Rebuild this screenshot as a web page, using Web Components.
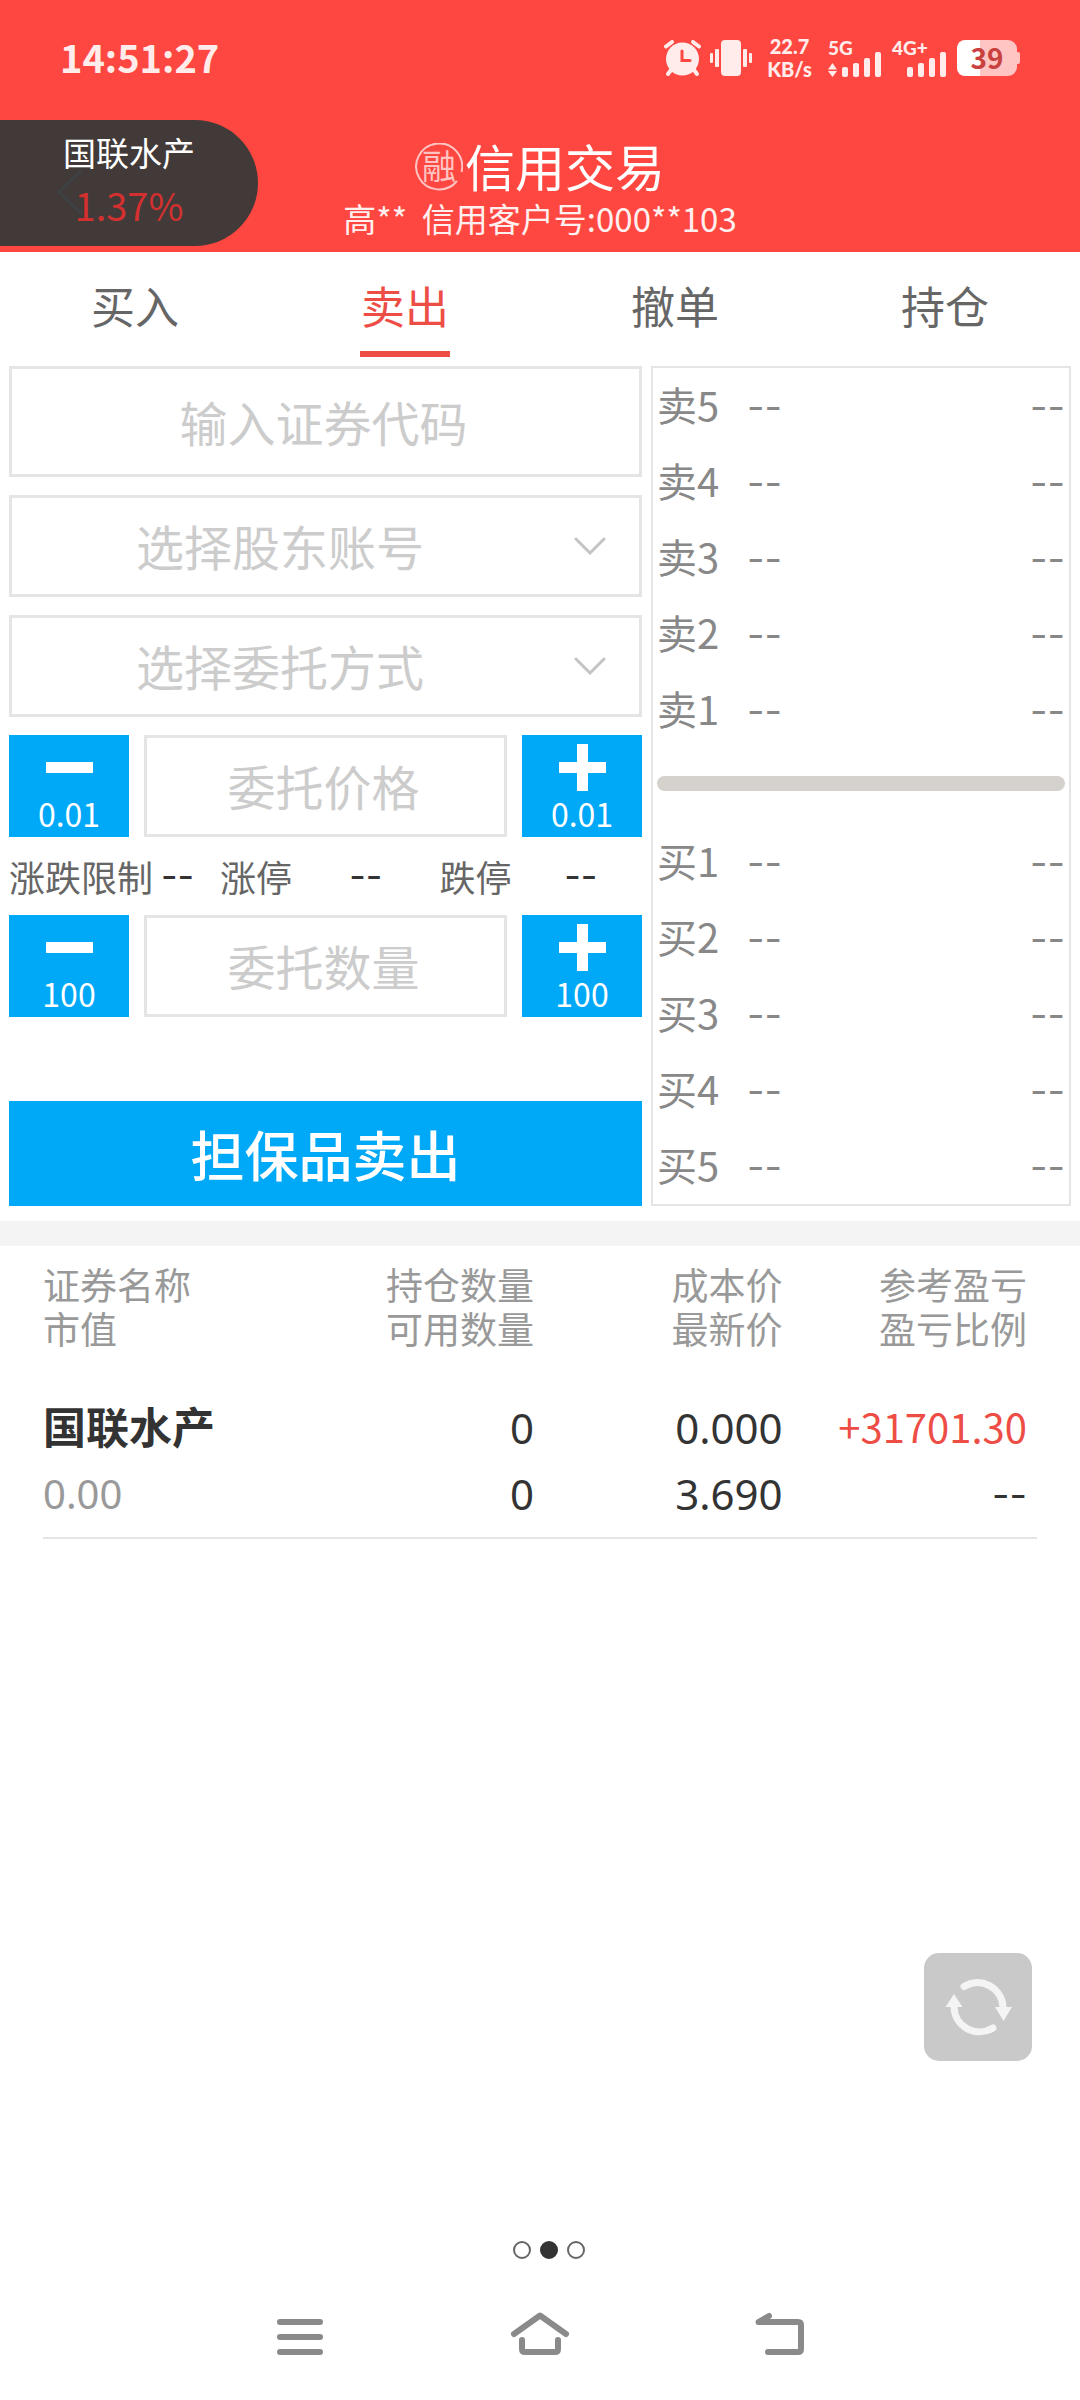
<!DOCTYPE html>
<html lang="zh-CN">
<head>
<meta charset="utf-8">
<meta name="viewport" content="width=device-width, initial-scale=1">
<title>信用交易</title>
<style>
:root {
  --brand: #ff4741;
  --accent: #ee4d46;
  --blue: #00a8f8;
  --line: #e5e5e5;
  --hint: #ccc;
  --muted: #999;
  --ink: #333;
}
body {
  margin: 0;
  background: #fff;
  color: var(--ink);
  font-family: "Noto Sans CJK SC", "Noto Sans", sans-serif;
}
</style>
</head>
<body>
<trade-app>
  <status-bar slot="top" time="14:51:27" rate="22.7" unit="KB/s" battery="39"></status-bar>
  <page-header slot="top" seal="融" heading="信用交易">高**&nbsp; 信用客户号:000**103
    <ticker-pill slot="float" name="国联水产" change="1.37%"></ticker-pill>
  </page-header>
  <tab-bar slot="top">
    <tab-item>买入</tab-item>
    <tab-item active>卖出</tab-item>
    <tab-item>撤单</tab-item>
    <tab-item>持仓</tab-item>
  </tab-bar>
  <order-panel slot="order">
    <text-field tall hint="输入证券代码"></text-field>
    <pick-field hint="选择股东账号"></pick-field>
    <pick-field hint="选择委托方式"></pick-field>
    <step-field hint="委托价格" step="0.01"></step-field>
    <price-limits></price-limits>
    <step-field hint="委托数量" step="100"></step-field>
    <submit-button>担保品卖出</submit-button>
    <order-book slot="book"></order-book>
  </order-panel>
  <holdings-table></holdings-table>
  <refresh-button slot="float"></refresh-button>
  <page-dots slot="bottom" count="3" current="1"></page-dots>
  <system-nav slot="bottom"></system-nav>
</trade-app>

<script>
const define = (name, render) => customElements.define(name, class extends HTMLElement {
  connectedCallback() {
    if (this.shadowRoot) return;
    const root = this.attachShadow({ mode: "open" });
    root.innerHTML = render(this);
  }
});
const attr = (el, name) => el.getAttribute(name) || "";

define("trade-app", () => `
  <style>
    :host { display: flex; flex-direction: column; min-height: 100vh; }
    main { flex: 1; display: flex; flex-direction: column; position: relative; }
  </style>
  <header><slot name="top"></slot></header>
  <main><slot name="order"></slot><slot></slot><slot name="float"></slot></main>
  <footer><slot name="bottom"></slot></footer>`);

define("status-bar", el => `
  <style>
    :host { display: flex; align-items: center; justify-content: space-between; height: 116px; padding: 0 60px;
      background: var(--brand); color: #ffeceb; font-weight: 700; }
    time { font-size: 38px; line-height: 48px; padding-bottom: 2px; }
    .icons { display: flex; align-items: center; }
    svg { display: block; fill: currentColor; }
    .vib { margin-left: 9px; }
    .rate { margin-left: 15px; font-family: Lato, sans-serif; font-weight: 900; font-size: 20px; line-height: 23px; text-align: center; width: 45px; }
    .rate span { display: block; }
    .sig { margin-left: 16px; height: 40px; width: 54px; display: flex; flex-direction: column;
      font-family: Lato, sans-serif; font-weight: 900; font-size: 19px; line-height: 20px; }
    .sig svg { margin-top: -6px; }
    .sig.second { margin-left: 10px; width: 55px; }
    .sig.second svg { align-self: flex-end; }
    .bat { margin-left: 10px; width: 63px; height: 36px; display: grid; }
    .bat > * { grid-area: 1 / 1; }
    .bat span { width: 60px; text-align: center; font-size: 28px; line-height: 34px; color: #c8413e; }
  </style>
  <time>${attr(el, "time")}</time>
  <div class="icons">
    <svg width="37" height="36" viewBox="0 0 37 36">
      <circle cx="18.500" cy="19" r="16.500"/>
      <path d="M2 6.500 8 2M35 6.500 29 2M7 30l-3 4M30 30l3 4" fill="none" stroke="currentColor" stroke-width="4" stroke-linecap="round"/>
      <path d="M18 11v9.500h8" fill="none" stroke="#ff4741" stroke-width="3" stroke-linecap="round"/>
    </svg>
    <svg class="vib" width="42" height="36" viewBox="0 0 42 36">
      <rect x="11" width="20" height="36" rx="4"/><rect x="5" y="9" width="4" height="18" rx="1"/><rect x="33" y="9" width="4" height="18" rx="1"/>
      <rect y="13" width="3" height="10" rx="1"/><rect x="39" y="13" width="3" height="10" rx="1"/>
    </svg>
    <div class="rate"><span>${attr(el, "rate")}</span><span>${attr(el, "unit")}</span></div>
    <div class="sig">5G
      <svg width="54" height="25" viewBox="0 0 54 25">
        <path d="M0 17.500 4.500 11 9 17.500zM0 19h9l-4.500 6z"/>
        <rect x="14" y="15" width="6" height="10" rx="2"/><rect x="25" y="11" width="6" height="14" rx="2"/>
        <rect x="36" y="6" width="6" height="19" rx="2"/><rect x="47" width="6" height="25" rx="2"/>
      </svg>
    </div>
    <div class="sig second">4G+
      <svg width="40" height="25" viewBox="0 0 40 25">
        <rect y="15" width="6" height="10" rx="2"/><rect x="11" y="11" width="6" height="14" rx="2"/>
        <rect x="22" y="6" width="6" height="19" rx="2"/><rect x="33" width="6" height="25" rx="2"/>
      </svg>
    </div>
    <div class="bat">
      <svg width="63" height="36" viewBox="0 0 63 36">
        <path d="M60 12h1q2 0 2 2v8q0 2-2 2h-1z" fill="#ffc5c3"/>
        <rect width="60" height="36" rx="9" fill="#ffc5c3"/>
        <path d="M23 0H9Q0 0 0 9v18q0 9 9 9h14z" fill="#fff"/>
      </svg>
      <span>${attr(el, "battery")}</span>
    </div>
  </div>`);

define("page-header", el => `
  <style>
    :host { display: block; position: relative; background: var(--brand); color: #fff; height: 136px; text-align: center; }
    .head { display: flex; flex-direction: column; align-items: center; padding-top: 26px; }
    h1 { display: flex; align-items: center; gap: 2px; margin: 0; font-family: "Liberation Sans", "Noto Sans CJK SC", sans-serif;
      font-size: 50px; line-height: 56px; font-weight: 400; }
    .seal { align-self: flex-start; display: grid; place-items: center; width: 48px; height: 48px; font-size: 34px; line-height: 50px; color: #ffc4c1; }
    .seal > * { grid-area: 1 / 1; }
    p { margin: 0; font-size: 33px; line-height: 40px; color: #fff0ef; }
  </style>
  <div class="head">
    <h1><span class="seal"><svg width="48" height="48" viewBox="0 0 48 48" fill="none" stroke="currentColor" stroke-width="2"><path d="M46.500 29A23 23 0 1 0 42 38"/></svg><span>${attr(el, "seal")}</span></span>${attr(el, "heading")}</h1>
    <p><slot></slot></p>
  </div>
  <slot name="float"></slot>`);

define("ticker-pill", el => `
  <style>
    :host { position: absolute; left: 0; top: 4px; width: 258px; height: 126px; box-sizing: border-box; padding-top: 6px;
      border-radius: 0 63px 63px 0; background: #423a39; display: flex; flex-direction: column; align-items: center; color: #fff; }
    svg { position: absolute; left: 56px; top: 48px; fill: none; stroke: #3e4142; stroke-width: 3; }
    span, b { position: relative; }
    span { font-size: 33px; line-height: 52px; }
    b { font-weight: 400; font-size: 38px; line-height: 54px; color: #d3302f; }
  </style>
  <svg width="28" height="48" viewBox="0 0 28 48"><path d="M26 2 3 24l23 22"/></svg>
  <span>${attr(el, "name")}</span><b>${attr(el, "change")}</b>`);

define("tab-bar", () => `
  <style>:host { display: block; } nav { display: flex; }</style>
  <nav><slot></slot></nav>`);

define("tab-item", () => `
  <style>
    :host { flex: 1; display: flex; justify-content: center; }
    button { box-sizing: border-box; font: inherit; font-size: 44px; line-height: 91px; height: 105px; width: 90px; padding: 8px 0 0; border: 0; background: none;
      color: #666; border-bottom: 6px solid transparent; white-space: nowrap; }
    :host([active]) button { color: var(--accent); border-color: var(--accent); }
  </style>
  <button type="button"><slot></slot></button>`);

define("order-panel", () => `
  <style>
    :host { display: block; border-bottom: 25px solid #f4f4f4; }
    .cols { display: grid; grid-template-columns: 633fr 420fr; gap: 9px; padding: 9px 9px 15px; }
    form { display: flex; flex-direction: column; min-width: 0; }
  </style>
  <div class="cols"><form><slot></slot></form><slot name="book"></slot></div>`);

const fieldCss = `
    input, select { display: block; box-sizing: border-box; width: 100%; height: 102px; margin: 0; padding: 0 4px 2px 0; border: 3px solid var(--line);
      border-radius: 0; background: #fff; font: inherit; font-size: 48px; text-align: center; color: var(--ink); outline: 0; }
    input::placeholder { color: var(--hint); opacity: 1; }`;

define("text-field", el => `
  <style>
    :host { display: block; margin-bottom: 18px; }
    ${fieldCss}
    :host([tall]) input { height: 111px; }
  </style>
  <input type="text" placeholder="${attr(el, "hint")}" aria-label="${attr(el, "hint")}">`);

define("pick-field", el => `
  <style>
    :host { display: grid; align-items: center; margin-bottom: 18px; }
    ${fieldCss}
    select { grid-area: 1 / 1; appearance: none; color: var(--hint); padding-right: 91px; text-align-last: center; }
    svg { grid-area: 1 / 1; justify-self: end; margin-right: 36px; pointer-events: none; fill: none; stroke: #c4c4c4; stroke-width: 3; stroke-linecap: round; }
  </style>
  <select aria-label="${attr(el, "hint")}"><option>${attr(el, "hint")}</option></select>
  <svg width="32" height="18" viewBox="0 0 32 18"><path d="M2 2l14 14L30 2"/></svg>`);

define("step-field", el => `
  <style>
    :host { display: grid; grid-template-columns: 120px 1fr 120px; gap: 15px; }
    ${fieldCss}
    button { display: flex; flex-direction: column; align-items: center; height: 102px; padding: 9px 0 0; border: 0; background: var(--blue); color: #fff;
      font: inherit; font-size: 32px; line-height: 44px; }
    svg { display: block; fill: #fff; flex: none; }
  </style>
  <button type="button"><svg width="47" height="47" viewBox="0 0 47 47"><path d="M0 18h47v11H0z"/></svg><span>${attr(el, "step")}</span></button>
  <input type="text" placeholder="${attr(el, "hint")}" aria-label="${attr(el, "hint")}">
  <button type="button"><svg width="47" height="47" viewBox="0 0 47 47"><path d="M0 18h47v11H0zM18 0h11v47H18z"/></svg><span>${attr(el, "step")}</span></button>`);

define("price-limits", () => `
  <style>
    :host { display: grid; grid-template-columns: 144px 51px 72px 132fr 72px 123fr; gap: 8px; align-items: center; height: 78px;
      font-size: 36px; line-height: 78px; color: #666; white-space: nowrap; }
    b { font-family: Inter, sans-serif; font-weight: 400; color: var(--ink); text-align: center; }
    b:first-of-type { text-align: left; }
  </style>
  <span>涨跌限制</span><b>--</b><span>涨停</span><b>--</b><span>跌停</span><b>--</b>`);

define("submit-button", () => `
  <style>
    :host { display: block; margin-top: 84px; }
    button { display: block; width: 100%; height: 105px; padding: 0; border: 0; background: var(--blue); color: #fff; font: inherit; font-size: 54px; font-weight: 500; line-height: 105px; }
  </style>
  <button type="button"><slot></slot></button>`);

const bookRow = label => `<div class="row"><span>${label}</span><b>--</b><b class="end">--</b></div>`;
define("order-book", () => `
  <style>
    :host { display: flex; flex-direction: column; box-sizing: border-box; border: 2px solid var(--line); padding: 0 4px; color: #888; font-size: 40px; }
    .row { display: grid; grid-template-columns: 90px 1fr 1fr; align-items: start; flex: 1; line-height: 76px; }
    span { line-height: 72px; }
    b { font-family: Inter, sans-serif; font-weight: 400; font-size: 38px; }
    .end { text-align: right; }
    .mid { flex: 1; display: flex; align-items: center; box-sizing: border-box; padding-bottom: 5px; min-height: 76px; }
    hr { flex: 1; height: 15px; margin: 0; border: 0; border-radius: 8px; background: #d5d1cc; }
  </style>
  ${[5, 4, 3, 2, 1].map(n => bookRow("卖" + n)).join("")}
  <div class="mid"><hr></div>
  ${[1, 2, 3, 4, 5].map(n => bookRow("买" + n)).join("")}`);

const cell = (tag, a, b) => `<${tag}><span>${a}</span><span>${b}</span></${tag}>`;
define("holdings-table", () => `
  <style>
    :host { display: block; padding: 20px 43px 0; }
    table { width: 100%; table-layout: fixed; border-collapse: collapse; }
    th, td { padding: 0 6px 0 0; text-align: right; font-weight: 400; white-space: nowrap; }
    span { display: block; }
    th { font-family: "Liberation Sans", "Noto Sans CJK SC", sans-serif; font-size: 37px; color: var(--muted); }
    th span { height: 44px; line-height: 44px; }
    td { font-family: "Noto Sans", "Noto Sans CJK SC", sans-serif; font-size: 42px; padding-top: 41px; padding-bottom: 10px; border-bottom: 2px solid var(--line); }
    td span { height: 66px; line-height: 66px; }
    th:first-child, td:first-child { text-align: left; }
    th:last-child, td:last-child { padding-right: 10px; }
    td:first-child span:first-child { font-weight: 700; font-size: 43px; }
    td:first-child span:last-child { font-size: 40px; color: var(--muted); }
    td:last-child span:first-child { font-family: "Noto Sans CJK SC", sans-serif; font-size: 40px; line-height: 62px; color: var(--accent); }
    td:last-child span:last-child { font-family: Inter, sans-serif; font-size: 38px; }
  </style>
  <table>
    <thead><tr>${cell("th", "证券名称", "市值")}${cell("th", "持仓数量", "可用数量")}${cell("th", "成本价", "最新价")}${cell("th", "参考盈亏", "盈亏比例")}</tr></thead>
    <tbody><tr>${cell("td", "国联水产", "0.00")}${cell("td", "0", "0")}${cell("td", "0.000", "3.690")}${cell("td", "+31701.30", "--")}</tr></tbody>
  </table>`);

define("refresh-button", () => `
  <style>
    :host { position: absolute; right: 48px; bottom: 165px; }
    button { display: grid; place-items: center; width: 108px; height: 108px; padding: 0; border: 0; border-radius: 15px; background: #c9c9c9; }
  </style>
  <button type="button" aria-label="刷新">
    <svg width="108" height="108" viewBox="0 0 108 108" fill="none" stroke="#f4f4f4" stroke-width="7" stroke-linecap="round">
      <path d="M40 33.500A25.500 25.500 0 0 1 79 54M69 75A25.500 25.500 0 0 1 30 54"/>
      <path d="M71 54h17L79.500 68zM21.500 54h17L30 41z" fill="#f4f4f4" stroke="none"/>
    </svg>
  </button>`);

define("page-dots", el => `
  <style>
    :host { display: flex; justify-content: center; align-items: center; gap: 9px; height: 48px; padding-left: 18px; }
    i { box-sizing: border-box; width: 18px; height: 18px; border: 2px solid #666; border-radius: 50%; }
    i.on { background: #333; border-color: #333; }
  </style>
  ${Array.from({ length: +attr(el, "count") }, (_, i) => `<i class="${i === +attr(el, "current") ? "on" : ""}"></i>`).join("")}`);

define("system-nav", () => `
  <style>
    :host { display: block; }
    nav { display: grid; grid-template-columns: 3fr 4fr 4fr 4fr 3fr; height: 126px; }
    button { display: grid; place-items: center; padding: 0; border: 0; background: none; }
    button:first-child { grid-column: 2; }
    svg { fill: none; stroke: #8a8a8a; stroke-width: 6; stroke-linecap: round; stroke-linejoin: round; }
  </style>
  <nav>
    <button type="button" aria-label="菜单"><svg width="60" height="50" viewBox="0 0 60 50"><path d="M10 10h40M10 25h40M10 40h40"/></svg></button>
    <button type="button" aria-label="主页"><svg width="60" height="50" viewBox="0 0 60 50"><path d="M4 22 30 3.500 56 22M12 28v9q0 3 3 3h30q3 0 3-3v-9"/></svg></button>
    <button type="button" aria-label="返回"><svg width="60" height="50" viewBox="0 0 60 50"><path d="M18 40h30q3 0 3-3V13q0-3-3-3H8.500L19 4"/></svg></button>
  </nav>`);
</script>
</body>
</html>
